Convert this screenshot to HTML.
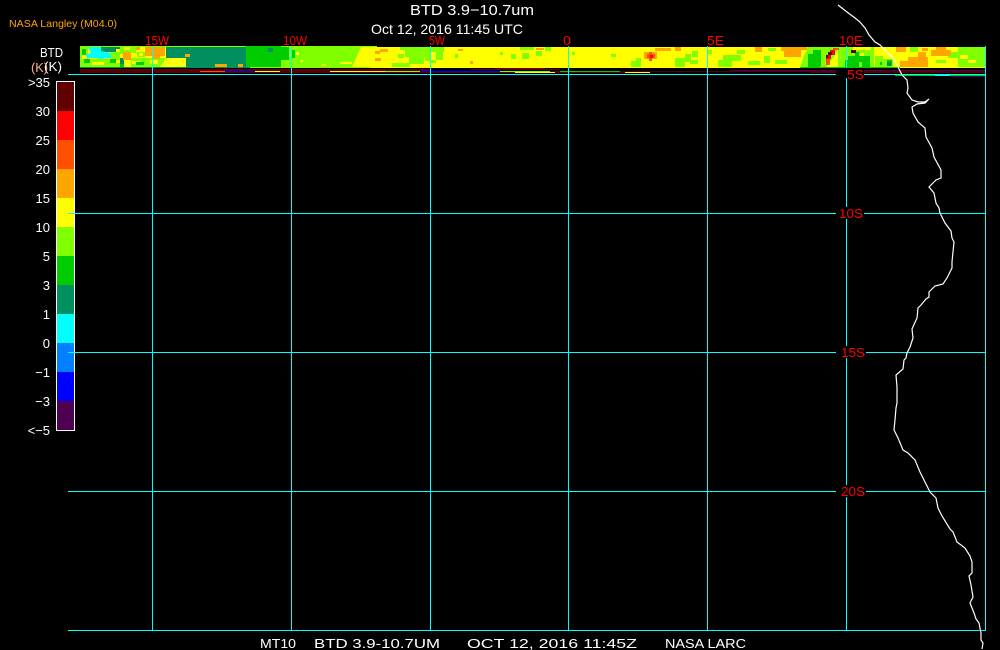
<!DOCTYPE html>
<html><head><meta charset="utf-8"><style>
html,body{margin:0;padding:0;background:#000;width:1000px;height:650px;overflow:hidden}
svg{display:block}
text{font-family:"Liberation Sans",sans-serif}
</style></head><body>
<svg width="1000" height="650" viewBox="0 0 1000 650" xmlns="http://www.w3.org/2000/svg">
<rect width="1000" height="650" fill="#000"/>
<g shape-rendering="crispEdges">
<!-- strip base -->
<rect x="80" y="47" width="905" height="20" fill="#ff0"/>
<rect x="80" y="46" width="297" height="1" fill="#80ff00"/>
<g fill="#80ff00">
<rect x="80" y="47" width="8" height="20"/><rect x="88" y="59" width="23" height="8"/><rect x="111" y="52" width="12" height="15"/><rect x="131" y="58" width="14" height="9"/><rect x="120" y="47" width="16" height="6"/><rect x="137" y="52" width="8" height="5"/><rect x="145" y="58" width="21" height="9"/>
<rect x="281" y="46" width="82" height="21"/><rect x="363" y="47" width="10" height="9"/><rect x="373" y="47" width="4" height="4"/>
<rect x="405" y="47" width="22" height="10"/><rect x="409" y="57" width="15" height="7"/><rect x="380" y="59" width="8" height="3"/><rect x="425" y="47" width="5" height="14"/><rect x="392" y="63" width="18" height="4"/><rect x="398" y="54" width="6" height="4"/>
<rect x="431" y="47" width="13" height="5"/><rect x="436" y="52" width="7" height="8"/><rect x="430" y="60" width="6" height="3"/><rect x="455" y="54" width="3" height="4"/><rect x="400" y="47" width="5" height="3"/>
<rect x="511" y="54" width="5" height="5"/><rect x="520" y="47" width="14" height="3"/><rect x="522" y="53" width="7" height="6"/><rect x="536" y="51" width="6" height="5"/><rect x="545" y="47" width="6" height="4"/><rect x="500" y="52" width="3" height="3"/>
<rect x="572" y="52" width="3" height="3"/><rect x="611" y="54" width="5" height="3"/><rect x="631" y="61" width="10" height="6"/><rect x="636" y="58" width="5" height="3"/>
<rect x="675" y="58" width="10" height="9"/><rect x="685" y="54" width="6" height="8"/><rect x="692" y="51" width="6" height="6"/><rect x="690" y="60" width="8" height="4"/>
<rect x="718" y="60" width="14" height="7"/><rect x="723" y="55" width="18" height="6"/><rect x="707" y="50" width="5" height="4"/><rect x="737" y="50" width="8" height="4"/><rect x="748" y="61" width="12" height="4"/>
<rect x="764" y="56" width="6" height="7"/><rect x="775" y="60" width="12" height="4"/><rect x="768" y="48" width="8" height="3"/>
<polygon points="808,47 840,47 835,55 826,68 800,68 803,58"/><rect x="838" y="47" width="36" height="21"/><rect x="875" y="56" width="8" height="12"/><rect x="879" y="59" width="14" height="9"/>
<rect x="910" y="47" width="8" height="5"/><rect x="958" y="47" width="27" height="20"/><rect x="948" y="52" width="10" height="6"/><rect x="936" y="60" width="10" height="3"/>
</g>
<g fill="#ff0">
<rect x="960" y="55" width="8" height="4"/><rect x="968" y="60" width="8" height="3"/><rect x="340" y="62" width="12" height="2"/><rect x="120" y="54" width="3" height="5"/><rect x="853" y="47" width="18" height="3"/>
<rect x="92" y="62" width="12" height="3"/><rect x="82" y="54" width="5" height="5"/><rect x="114" y="60" width="8" height="3"/><rect x="132" y="61" width="8" height="3"/><rect x="124" y="47" width="6" height="3"/><rect x="150" y="60" width="8" height="4"/><rect x="139" y="53" width="4" height="3"/>
<polygon points="166,58 186,60 192,67 160,67"/><rect x="238" y="60" width="12" height="7"/>
<rect x="180" y="54" width="4" height="2"/><rect x="860" y="53" width="4" height="5"/>
<polygon points="361,47 388,47 388,67 352,67 356,58"/>
<rect x="300" y="60" width="3" height="2"/><rect x="322" y="64" width="4" height="2"/><rect x="296" y="52" width="3" height="3"/>
</g>
<g fill="#00cc00">
<rect x="246" y="46" width="35" height="21"/><rect x="281" y="47" width="8" height="13"/><rect x="292" y="50" width="3" height="8"/>
<rect x="82" y="49" width="4" height="6"/><rect x="84" y="59" width="6" height="4"/><rect x="110" y="59" width="6" height="4"/><rect x="136" y="62" width="8" height="3"/><rect x="120" y="62" width="4" height="5"/>
<rect x="808" y="54" width="13" height="13"/><rect x="813" y="50" width="8" height="4"/><rect x="845" y="60" width="10" height="8"/><rect x="848" y="56" width="22" height="6"/><rect x="855" y="52" width="4" height="16"/><rect x="880" y="62" width="2" height="3"/><rect x="887" y="60" width="5" height="6"/><rect x="862" y="61" width="8" height="6"/>
</g>
<g fill="#009060">
<rect x="166" y="47" width="80" height="11"/><rect x="186" y="58" width="60" height="9"/><rect x="101" y="47" width="15" height="5"/><rect x="116" y="47" width="4" height="2"/><rect x="120" y="58" width="4" height="6"/>
<rect x="226" y="54" width="1" height="1"/><rect x="887" y="62" width="4" height="4"/><rect x="268" y="48" width="5" height="4"/>
</g>
<polygon points="88,47 101,47 101,51 111,53 111,58 100,59 96,58 88,58 85,55 91,53" fill="#0ff" shape-rendering="auto"/>
<g fill="#ffa500">
<rect x="123" y="52" width="8" height="8"/><rect x="145" y="47" width="20" height="9"/><rect x="152" y="56" width="8" height="3"/><rect x="136" y="47" width="4" height="3"/><rect x="185" y="54" width="5" height="3"/><rect x="215" y="64" width="12" height="3"/><rect x="238" y="64" width="5" height="3"/><rect x="375" y="51" width="5" height="3"/>
<rect x="380" y="49" width="8" height="3"/><rect x="375" y="58" width="6" height="3"/>
<rect x="644" y="52" width="13" height="7"/><rect x="655" y="48" width="16" height="3"/><rect x="675" y="47" width="6" height="4"/><rect x="470" y="61" width="3" height="3"/><rect x="458" y="49" width="5" height="2"/><rect x="536" y="48" width="8" height="2"/>
<rect x="755" y="47" width="7" height="5"/><rect x="784" y="51" width="17" height="6"/><rect x="781" y="47" width="20" height="4"/><rect x="793" y="47" width="14" height="3"/><rect x="820" y="66" width="6" height="2"/>
<rect x="896" y="47" width="10" height="5"/><rect x="908" y="57" width="20" height="11"/><rect x="900" y="61" width="8" height="7"/><rect x="918" y="52" width="8" height="5"/><rect x="931" y="50" width="20" height="6"/><rect x="936" y="47" width="10" height="3"/><rect x="922" y="48" width="6" height="3"/>
</g>
<g fill="#ff5000"><rect x="647" y="54" width="8" height="4"/><rect x="649" y="52" width="3" height="9"/><rect x="826" y="58" width="4" height="7"/><rect x="833" y="48" width="6" height="2"/></g>
<g fill="#ff0000"><rect x="650" y="55" width="3" height="3"/><rect x="826" y="55" width="5" height="4"/><rect x="830" y="50" width="5" height="5"/></g>
<g fill="#600000"><rect x="828" y="52" width="4" height="3"/><rect x="851" y="50" width="5" height="3"/><rect x="826" y="55" width="2" height="3"/></g>
<!-- bottom bands -->
<rect x="80" y="67" width="905" height="1" fill="#ff0"/>
<rect x="80" y="67" width="170" height="1" fill="#009060"/><rect x="250" y="67" width="120" height="1" fill="#80ff00"/><rect x="800" y="67" width="100" height="1" fill="#00cc00"/>
<rect x="80" y="68" width="905" height="3" fill="#000"/>
<rect x="80" y="69" width="350" height="2" fill="#600000"/><rect x="470" y="69" width="90" height="1" fill="#600000"/><rect x="495" y="68" width="50" height="1" fill="#600000"/><rect x="730" y="70" width="255" height="1" fill="#500050"/>
<rect x="80" y="71" width="905" height="2" fill="#500000"/>
<rect x="200" y="71" width="25" height="1" fill="#ff5000"/><rect x="225" y="71" width="30" height="1" fill="#0000ff"/><rect x="255" y="71" width="25" height="1" fill="#ff0"/><rect x="330" y="71" width="55" height="1" fill="#ff0"/><rect x="385" y="71" width="35" height="1" fill="#80ff00"/><rect x="420" y="71" width="30" height="1" fill="#0000ff"/>
<rect x="80" y="72" width="905" height="1" fill="#500000"/>
<rect x="450" y="71" width="50" height="1" fill="#0000ff"/><rect x="500" y="71" width="50" height="1" fill="#80ff00"/><rect x="515" y="72" width="40" height="1" fill="#ff0"/><rect x="650" y="72" width="160" height="1" fill="#000"/>
<rect x="560" y="71" width="60" height="1" fill="#00cc00"/><rect x="625" y="72" width="25" height="1" fill="#ff0"/>
<!-- grid -->
<g fill="#0ff">
<rect x="152" y="46" width="1" height="585"/><rect x="291" y="46" width="1" height="585"/><rect x="430" y="46" width="1" height="585"/><rect x="568" y="46" width="1" height="585"/><rect x="707" y="46" width="1" height="585"/><rect x="846" y="46" width="1" height="585"/><rect x="985" y="46" width="1" height="585"/>
<rect x="68" y="74" width="917" height="1"/><rect x="68" y="213" width="917" height="1"/><rect x="68" y="352" width="917" height="1"/><rect x="68" y="491" width="917" height="1"/><rect x="68" y="630" width="917" height="1"/>
</g>
<rect x="895" y="75" width="90" height="1" fill="#00cc00"/><rect x="950" y="76" width="35" height="1" fill="#500050"/><rect x="935" y="75" width="15" height="1" fill="#0ff"/>
<rect x="986" y="46" width="14" height="31" fill="#000"/>
<!-- label backdrops -->
<rect x="836" y="68" width="28" height="10" fill="#000"/>
<rect x="836" y="207" width="28" height="12" fill="#000"/>
<rect x="836" y="346" width="30" height="12" fill="#000"/>
<rect x="836" y="485" width="30" height="12" fill="#000"/>
<!-- colour bar -->
<rect x="56" y="81" width="19" height="350" fill="#fff"/>
<rect x="57" y="82" width="17" height="29" fill="#600000"/><rect x="57" y="111" width="17" height="29" fill="#f00"/><rect x="57" y="140" width="17" height="29" fill="#ff5000"/><rect x="57" y="169" width="17" height="29" fill="#ffa500"/><rect x="57" y="198" width="17" height="29" fill="#ff0"/><rect x="57" y="227" width="17" height="29" fill="#80ff00"/><rect x="57" y="256" width="17" height="29" fill="#00cc00"/><rect x="57" y="285" width="17" height="29" fill="#009060"/><rect x="57" y="314" width="17" height="29" fill="#0ff"/><rect x="57" y="343" width="17" height="29" fill="#0080ff"/><rect x="57" y="372" width="17" height="29" fill="#00f"/><rect x="57" y="401" width="17" height="29" fill="#500050"/>
<rect x="68" y="213" width="7" height="1" fill="#0ff"/><rect x="68" y="352" width="7" height="1" fill="#0ff"/>
</g>
<!-- coastline -->
<polyline fill="none" stroke="#fff" stroke-width="1.2" points="838,5 847,12 855,18 860,22 865,28 869,35 875,42 880,45 887,52 893,58 898,67 902,75 907,80 908,88 907,93 912,100 918,102 925,102 929,99 925,103 917,104 912,107 913,113 918,122 925,128 926,137 932,148 934,157 941,170 941,178 936,180 929,187 934,193 936,203 939,208 940,213 945,223 951,231 952,238 954,242 953,252 952,262 952,268 947,278 943,284 935,286 929,292 929,297 926,299 921,305 918,308 917,318 912,329 913,338 910,347 907,353 906,358 904,360 903,369 896,375 897,387 897,403 896,408 895,420 894,430 898,438 903,450 908,453 915,460 920,472 930,492 936,498 938,508 942,516 950,529 953,532 957,542 965,548 970,556 972,562 972,573 969,576 971,585 973,597 970,603 974,613 976,619 979,623 981,633 981,640 983,643 982,649"/>
<!-- text -->
<text x="410" y="15" font-size="15" fill="#fff" textLength="124" lengthAdjust="spacingAndGlyphs">BTD 3.9−10.7um</text>
<text x="371" y="34" font-size="14" fill="#fff" textLength="152" lengthAdjust="spacingAndGlyphs">Oct 12, 2016 11:45 UTC</text>
<text x="9" y="27" font-size="10.5" fill="#ffa500" textLength="108" lengthAdjust="spacingAndGlyphs">NASA Langley (M04.0)</text>
<g font-size="13" fill="#f00">
<text x="145" y="45" textLength="24" lengthAdjust="spacingAndGlyphs">15W</text>
<text x="283" y="45" textLength="24" lengthAdjust="spacingAndGlyphs">10W</text>
<text x="429" y="45" textLength="16" lengthAdjust="spacingAndGlyphs">5W</text>
<text x="563" y="45" textLength="8" lengthAdjust="spacingAndGlyphs">0</text>
<text x="707" y="45" textLength="17" lengthAdjust="spacingAndGlyphs">5E</text>
<text x="839" y="45" textLength="24" lengthAdjust="spacingAndGlyphs">10E</text>
<text x="847" y="79" textLength="17" lengthAdjust="spacingAndGlyphs">5S</text>
<text x="839" y="218" textLength="24" lengthAdjust="spacingAndGlyphs">10S</text>
<text x="841" y="357" textLength="24" lengthAdjust="spacingAndGlyphs">15S</text>
<text x="841" y="496" textLength="24" lengthAdjust="spacingAndGlyphs">20S</text>
</g>
<g font-size="13" fill="#fff" text-anchor="end">
<text x="50" y="87">&gt;35</text>
<text x="50" y="116">30</text>
<text x="50" y="145">25</text>
<text x="50" y="174">20</text>
<text x="50" y="203">15</text>
<text x="50" y="232">10</text>
<text x="50" y="261">5</text>
<text x="50" y="290">3</text>
<text x="50" y="319">1</text>
<text x="50" y="348">0</text>
<text x="50" y="377">−1</text>
<text x="50" y="406">−3</text>
<text x="50" y="435">&lt;−5</text>
</g>
<text x="40" y="57" font-size="13" fill="#fff" textLength="23" lengthAdjust="spacingAndGlyphs">BTD</text>
<text x="44" y="71" font-size="13" fill="#fff" textLength="18" lengthAdjust="spacingAndGlyphs">(K)</text>
<text x="31" y="72" font-size="13" fill="#ffb090" textLength="17" lengthAdjust="spacingAndGlyphs">(K)</text>
<g font-size="13" fill="#fff">
<text x="260" y="648" textLength="36" lengthAdjust="spacingAndGlyphs">MT10</text>
<text x="314" y="648" textLength="126" lengthAdjust="spacingAndGlyphs">BTD 3.9-10.7UM</text>
<text x="467" y="648" textLength="170" lengthAdjust="spacingAndGlyphs">OCT 12, 2016 11:45Z</text>
<text x="665" y="648" textLength="81" lengthAdjust="spacingAndGlyphs">NASA LARC</text>
</g>
</svg>
</body></html>
